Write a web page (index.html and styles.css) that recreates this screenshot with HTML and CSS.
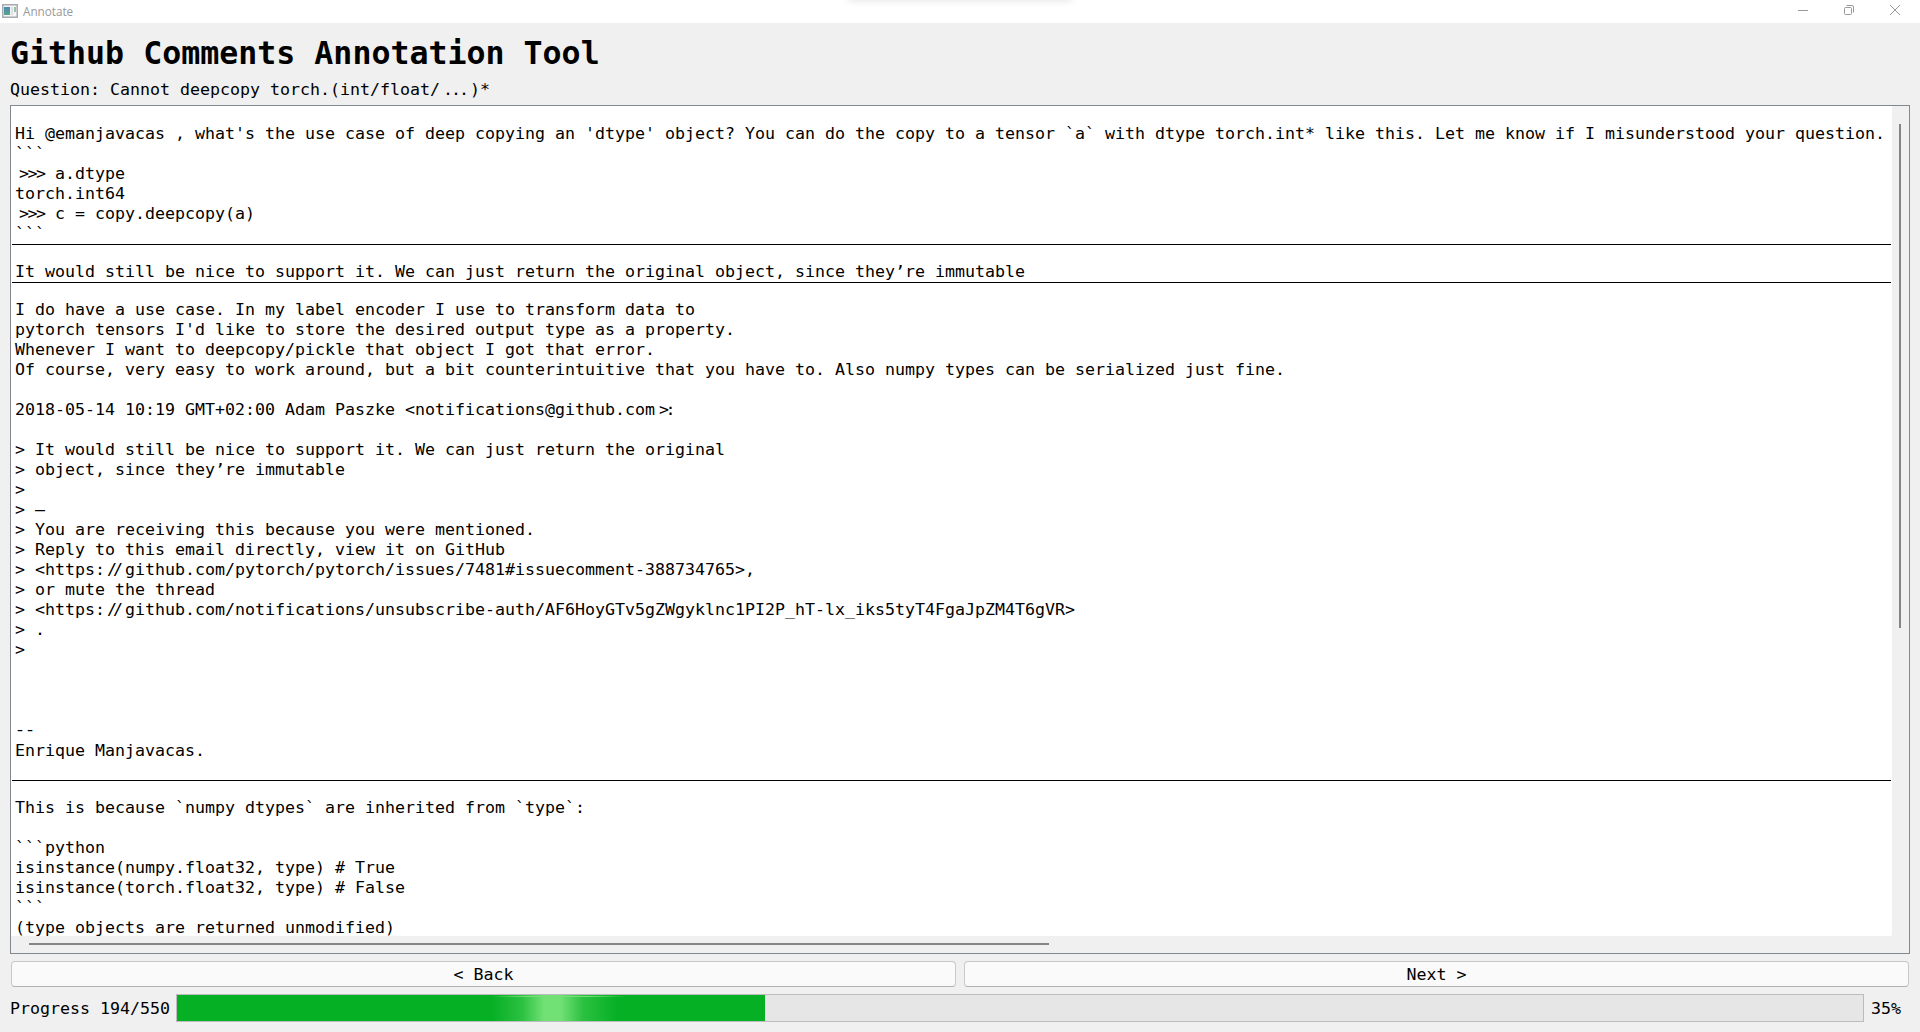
FILE: index.html
```html
<!DOCTYPE html>
<html lang="en">
<head>
<meta charset="utf-8">
<title>Annotate</title>
<link rel="stylesheet" href="styles.css">
</head>
<body>
<header class="titlebar">
  <svg class="app-icon" width="16" height="14" viewBox="0 0 16 14"><defs><linearGradient id="g" x2="0" y2="1"><stop offset="0" stop-color="#4d86b8"/><stop offset="1" stop-color="#58a58a"/></linearGradient></defs><rect x=".75" y=".75" width="14.5" height="12.5" fill="#f4f4f4" stroke="#a5abb0" stroke-width="1.5"/><rect x="2" y="3" width="6" height="8" fill="url(#g)"/><rect x="9" y="3" width="2" height="8" fill="#dedede"/><rect x="12" y="3" width="2" height="5" fill="#91c3ae"/></svg>
  <span class="app-name">Annotate</span>
  <div class="shade"></div>
  <div class="controls">
    <svg width="10" height="10" viewBox="0 0 10 10"><path d="M0 5.5h10"/></svg>
    <svg width="10" height="10" viewBox="0 0 10 10"><rect x=".5" y="2.5" width="7" height="7" rx="1"/><path d="M2.5 .5H8q1.5 0 1.5 1.5v5.5"/></svg>
    <svg width="10" height="10" viewBox="0 0 10 10"><path d="M0 0l10 10M10 0L0 10"/></svg>
  </div>
</header>
<main class="window">
  <h1>Github Comments Annotation Tool</h1>
  <p class="question">Question: Cannot deepcopy torch.(int/float/<span class="dots">...</span>)*</p>
  <section class="viewer">
    <div class="comments">
<pre class="comment first">Hi @emanjavacas , what's the use case of deep copying an 'dtype' object? You can do the copy to a tensor &#96;a&#96; with dtype torch.int* like this. Let me know if I misunderstood your question.
&#96;&#96;&#96;
<span class="prompt">&gt;&gt;&gt;</span> a.dtype
torch.int64
<span class="prompt">&gt;&gt;&gt;</span> c = copy.deepcopy(a)
&#96;&#96;&#96;</pre>
<pre class="comment">It would still be nice to support it. We can just return the original object, since they’re immutable</pre>
<pre class="comment long">I do have a use case. In my label encoder I use to transform data to
pytorch tensors I'd like to store the desired output type as a property.
Whenever I want to deepcopy/pickle that object I got that error.
Of course, very easy to work around, but a bit counterintuitive that you have to. Also numpy types can be serialized just fine.

2018-05-14 10:19 GMT+02:00 Adam Paszke &lt;notifications@github.com<span class="tail">&gt;:</span>

&gt; It would still be nice to support it. We can just return the original
&gt; object, since they’re immutable
&gt;
&gt; —
&gt; You are receiving this because you were mentioned.
&gt; Reply to this email directly, view it on GitHub
&gt; &lt;https:<span class="slashes">//</span>github.com/pytorch/pytorch/issues/7481#issuecomment-388734765&gt;,
&gt; or mute the thread
&gt; &lt;https:<span class="slashes">//</span>github.com/notifications/unsubscribe-auth/AF6HoyGTv5gZWgyklnc1PI2P_hT-lx_iks5tyT4FgaJpZM4T6gVR&gt;
&gt; .
&gt;



<span class="dashes">--</span>
Enrique Manjavacas.</pre>
<pre class="comment last">This is because &#96;numpy dtypes&#96; are inherited from &#96;type&#96;:

&#96;&#96;&#96;python
isinstance(numpy.float32, type) # True
isinstance(torch.float32, type) # False
&#96;&#96;&#96;
(type objects are returned unmodified)</pre>
    </div>
    <div class="vbar"><div class="vthumb"></div></div>
    <div class="hbar"><div class="hthumb"></div></div>
  </section>
  <nav class="buttons"><button>&lt; Back</button><button>Next &gt;</button></nav>
  <footer class="progress">
    <span class="label">Progress 194/550</span>
    <div class="track"><div class="fill"></div></div>
    <span class="label">35%</span>
  </footer>
</main>
</body>
</html>
```
FILE: styles.css
```css
* { box-sizing: border-box; }
body {
  margin: 0;
  height: 1032px;
  display: flex;
  flex-direction: column;
  overflow: hidden;
  background: #f0f0f0;
  color: #000;
  font: 16.61px/20px "DejaVu Sans Mono", monospace;
}
.titlebar {
  flex: none;
  height: 23px;
  display: flex;
  align-items: center;
  padding: 0 20px 0 2px;
  background: #fff;
  position: relative;
}
.app-icon { margin-top: -1px; }
.app-name { margin: -1px 0 0 5px; color: #999; font: 11.7px/16px "Open Sans", sans-serif; }
.shade {
  position: absolute;
  top: -6px;
  left: 848px;
  width: 224px;
  height: 6px;
  box-shadow: 0 0 8px rgba(0, 0, 0, .14);
}
.controls { margin: -3px 0 0 auto; display: flex; gap: 36px; }
.controls svg { fill: none; stroke: #999; }
.window { flex: 1; min-height: 0; display: flex; flex-direction: column; padding: 0 10px 10px; }
h1 { margin: 10px 0 0; height: 40px; font-size: 31.6px; line-height: 40px; font-weight: 700; }
.question { margin: 7px 0 0; height: 25px; white-space: pre; }
.viewer {
  flex: none;
  height: 849px;
  display: grid;
  grid-template: 830px 1fr / 1881px 1fr;
  border: 1px solid #828790;
}
.comments { overflow: hidden; background: #fff; border-radius: 0 0 2px 0; padding: 0 1px; }
.comment {
  margin: 0;
  padding: 17px 0 0 3px;
  height: 38px;
  border-bottom: 1px solid #000;
  font: inherit;
}
.comment.first { height: 139px; padding-top: 18px; }
.comment.long { height: 498px; }
.comment.last { height: auto; border: 0; }
.prompt, .dots, .slashes, .tail { display: inline-block; vertical-align: top; height: 20px; }
.prompt { width: 30px; padding-left: 4px; letter-spacing: -1.5px; }
.dots { width: 30px; padding-left: 3px; letter-spacing: -2px; }
.slashes { width: 20px; padding-left: 2px; letter-spacing: -4px; }
.tail { width: 20px; padding-left: 4px; letter-spacing: -3.5px; }
.dashes { font-family: "Liberation Mono", monospace; }
.vbar { padding: 18px 0 0 7px; }
.vthumb { width: 2px; height: 504px; background: #858585; }
.hbar { padding: 7px 0 0 18px; }
.hthumb { width: 1020px; height: 2px; background: #858585; }
.buttons { display: flex; gap: 8px; padding: 0 1px; margin-top: 7px; }
button {
  flex: 1;
  height: 26px;
  padding: 2px 0 0;
  border: 1px solid #c8c8c8;
  border-bottom-color: #b2b2b2;
  border-radius: 4px;
  background: #fafafa;
  color: #000;
  font: inherit;
}
.progress { display: flex; align-items: center; margin-top: 7px; height: 28px; }
.label { padding-top: 2px; }
.track { width: 1688px; height: 28px; margin: 0 7px 0 6px; border: 1px solid #bcbcbc; background: #e6e6e6; }
.fill {
  width: 588px;
  height: 26px;
  background:
    linear-gradient(90deg, transparent 315px, #71e075 350px 410px, transparent 450px) 0 1px / 100% 1px no-repeat,
    linear-gradient(90deg, rgba(113, 224, 117, 0) 315px, rgba(113, 224, 117, .35) 345px, #71e075 367px, #71e075 384px, rgba(113, 224, 117, .35) 406px, rgba(113, 224, 117, 0) 440px) #06b025;
}
```
